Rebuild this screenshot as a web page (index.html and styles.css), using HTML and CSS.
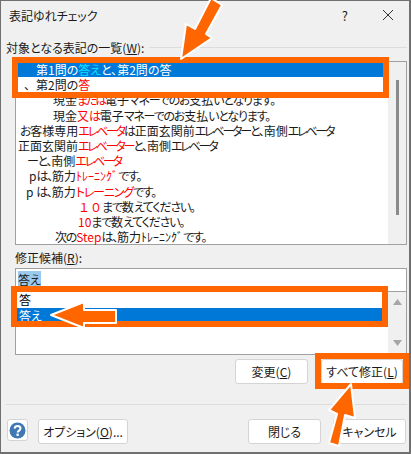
FILE: index.html
```html
<!DOCTYPE html>
<html lang="ja">
<head>
    <meta charset="UTF-8">
    <title>表記ゆれチェック</title>
    <link rel="stylesheet" href="styles.css">
</head>
<body>
    <div class="dialog">
        <div class="titlebar">
            <span class="title">表記ゆれチェック</span>
            <span class="help-q">?</span>
            <svg class="close-x" width="12" height="12" viewBox="0 0 12 12"><path d="M1 1l10 10M11 1L1 11" stroke="#333" fill="none"/></svg>
        </div>

        <div class="group-label">
            <span>対象となる表記の一覧(<u>W</u>):</span>
            <div class="rule"></div>
        </div>
        <div class="listbox main-list">
            <div class="rows">
                <div class="row selected" style="padding-left:18px">第1問の<span class="cyan">答え</span>と、第2問の答</div>
                <div class="row" style="padding-left:6px"><span class="fw">、</span>第2問の<span class="red">答</span></div>
                <div class="row" style="padding-left:35px">現金<span class="red kt">または</span>電子<span class="k">マネーでのお</span>支払<span class="k">いとなります。</span></div>
                <div class="row" style="padding-left:35px">現金<span class="red">又</span><span class="red k">は</span>電子<span class="k">マネーでのお</span>支払<span class="k">いとなります。</span></div>
                <div class="row" style="padding-left:2px"><span class="k">お</span>客様専用<span class="red kt">エレベータ</span><span class="k">は</span>正面玄関前<span class="kt">エレベーター</span><span class="k">と、</span>南側<span class="kt">エレベータ</span></div>
                <div class="row" style="padding-left:0">正面玄関前<span class="red kt">エレベーター</span><span class="k">と、</span>南側<span class="kt">エレベータ</span></div>
                <div class="row" style="padding-left:9px"><span class="k">ーと、</span>南側<span class="red kt">エレベータ</span></div>
                <div class="row" style="padding-left:11px">p<span class="k">は、</span>筋力<span class="red">ﾄﾚｰﾆﾝｸﾞ</span><span class="k">です。</span></div>
                <div class="row" style="padding-left:8px">p <span class="k">は、</span>筋力<span class="red k">トレーニング</span><span class="k">です。</span></div>
                <div class="row" style="padding-left:60px"><span class="red fw">１０</span><span class="k">まで</span>数<span class="k">えてください。</span></div>
                <div class="row" style="padding-left:60px"><span class="red">10</span><span class="k">まで</span>数<span class="k">えてください。</span></div>
                <div class="row" style="padding-left:37px"><span class="k">次の</span><span class="red">Step</span><span class="k">は、</span>筋力ﾄﾚｰﾆﾝｸﾞ<span class="k">です。</span></div>
            </div>
            <div class="scrollbar">
                <div class="thumb"></div>
            </div>
        </div>

        <div class="sub-label">修正候補(<u>R</u>):</div>
        <div class="textbox"><span class="sel-text">答え</span></div>
        <div class="listbox sub-list">
            <div class="rows">
                <div class="row2">答</div>
                <div class="row2 selected">答え</div>
            </div>
            <div class="scrollbar arrows">
                <svg width="9" height="6" viewBox="0 0 9 6"><path d="M4.5 0L9 6H0z" fill="#a6a6a6"/></svg>
                <svg width="9" height="6" viewBox="0 0 9 6"><path d="M0 0h9L4.5 6z" fill="#a6a6a6"/></svg>
            </div>
        </div>

        <div class="btn-row right">
            <button class="btn">変更(<u>C</u>)</button>
            <button class="btn all-btn">すべて修正(<u>L</u>)</button>
        </div>
        <div class="sep"></div>
        <div class="btn-row bottom">
            <button class="btn help-btn">
                <svg width="17" height="17" viewBox="0 0 17 17"><circle cx="8.5" cy="8.5" r="8" fill="#3f78b5"/><path d="M5.6 6.6C5.8 4.9 7 4 8.6 4c1.700 0 2.900 1 2.900 2.500 0 2-2.800 2.200-2.800 4.100" stroke="#fff" stroke-width="2" fill="none"/><rect x="7.500" y="11.600" width="2.300" height="2.300" fill="#fff"/></svg>
            </button>
            <button class="btn opt-btn">オプション(<u>O</u>)...</button>
            <div class="spacer"></div>
            <button class="btn">閉じる</button>
            <button class="btn cancel-btn">キャンセル</button>
        </div>
    </div>

    <div class="frame frame-a"></div>
    <div class="frame frame-b"></div>
    <div class="frame frame-c"></div>

    <svg class="arrows-layer" width="411" height="454" viewBox="0 0 411 454">
        <path class="arrow" d="M181 59L186 24L195 29L211 -2L222 5L206 34L212 38Z"/>
        <path class="arrow" d="M51 315L84 302V310H116V323H84V328Z"/>
        <path class="arrow" d="M351 384L355 418L345 415L339 446L329 443L337 414L329 410Z"/>
    </svg>
</body>
</html>
```

FILE: styles.css
```css
* {
    box-sizing: border-box;
}

body {
    margin: 0;
    width: 411px;
    height: 454px;
    overflow: hidden;
    position: relative;
    font-family: "Noto Sans CJK JP", "Noto Sans", sans-serif;
    font-size: 12px;
    font-feature-settings: "palt";
    color: #1a1a1a;
    background: #f0f0f0;
}

.dialog {
    height: 454px;
    border: 1px solid #707070;
    border-width: 1px 2px 2px 1px;
    display: flex;
    flex-direction: column;
}

.titlebar {
    height: 28px;
    display: flex;
    align-items: center;
    padding: 0 15px 0 8px;
}

.title {
    flex: 1;
}

.help-q {
    font-size: 13px;
    margin-right: 34px;
}

.group-label {
    display: flex;
    align-items: center;
    gap: 5px;
    height: 18px;
    margin: 9px 2px 5px 5px;
}

.rule {
    flex: 1;
    height: 1px;
    background: #dcdcdc;
}

.listbox {
    display: flex;
    margin: 0 2px 0 14px;
    border: 1px solid #a0a0a0;
    background: #fff;
}

.main-list {
    height: 184px;
}

.rows {
    flex: 1;
    padding: 0 0 0 2px;
}

.row {
    height: 15.2px;
    line-height: 15.2px;
    white-space: nowrap;
    color: #1a1a1a;
}

.row.selected {
    background: #0078d7;
    color: #fff;
}

.red {
    color: #ff0000;
}

.cyan {
    color: #00e5ff;
}

/* kana in the reference font is much narrower than in Noto */
.k {
    letter-spacing: -1.2px;
}

.kt {
    letter-spacing: -2.2px;
}

.fw {
    font-feature-settings: normal;
}

.scrollbar {
    width: 18px;
    background: #f0f0f0;
    display: flex;
    justify-content: center;
    padding-top: 18px;
}

.thumb {
    width: 3px;
    height: 135px;
    background: #8a8a8a;
}

.sub-label {
    margin: 4px 0 0 14px;
    height: 18px;
    line-height: 18px;
}

.textbox {
    margin: 1px 2px 0 14px;
    height: 23px;
    border: 1px solid #a0a0a0;
    border-bottom: 0;
    background: #fff;
    padding: 2px 0 0 2px;
    line-height: 17px;
}

.sel-text {
    background: #99c9ef;
}

.sub-list {
    height: 64px;
}

.sub-list .rows {
    padding: 0 0 0 1px;
}

.row2 {
    height: 16px;
    line-height: 16px;
    padding-left: 2px;
    color: #000;
}

.row2.selected {
    background: #0078d7;
    color: #fff;
}

.scrollbar.arrows {
    flex-direction: column;
    align-items: center;
    justify-content: space-between;
    padding: 7px 0 8px;
}

.btn-row {
    display: flex;
}

.btn-row.right {
    justify-content: flex-end;
    gap: 13px;
    margin: 4px 6px 0 0;
}

.btn {
    height: 25px;
    width: 73px;
    padding: 0;
    border: 1px solid #d4d4d4;
    border-radius: 3px;
    background: #fff;
    font-family: inherit;
    font-size: 12px;
    font-feature-settings: "palt";
    color: #1a1a1a;
    white-space: nowrap;
}

.all-btn {
    width: 82px;
}

.sep {
    height: 1px;
    margin: 20px 2px 0 5px;
    background: #dcdcdc;
}

.btn-row.bottom {
    gap: 10px;
    margin: 14px 3px 0 6px;
}

.spacer {
    flex: 1;
}

.help-btn {
    width: 21px;
    height: 22px;
    display: flex;
    align-items: center;
    justify-content: center;
}

.opt-btn {
    width: 90px;
}

.cancel-btn {
    margin-left: 2px;
}

.frame {
    position: absolute;
    border: 6px solid #ff6600;
}

.frame-a {
    left: 12px;
    top: 57px;
    width: 377px;
    height: 41px;
}

.frame-b {
    left: 11px;
    top: 286px;
    width: 377px;
    height: 41px;
}

.frame-c {
    left: 315px;
    top: 353px;
    width: 94px;
    height: 36px;
}

.arrows-layer {
    position: absolute;
    left: 0;
    top: 0;
}

.arrow {
    fill: #ff6600;
    stroke: #fff;
    stroke-width: 2;
    stroke-linejoin: round;
}
```
